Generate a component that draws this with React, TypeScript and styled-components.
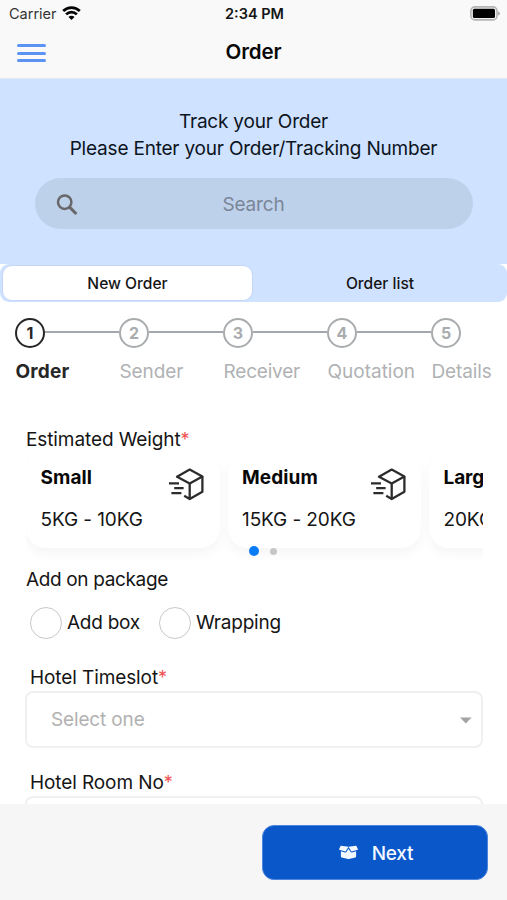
import React from "react";
import styled, { createGlobalStyle } from "styled-components";
import { FaBoxOpen } from "react-icons/fa";

const GlobalStyle = createGlobalStyle`
  *, *::before, *::after { box-sizing: border-box; }
  body { margin: 0; background: #fff; font-family: Inter, "Liberation Sans", sans-serif; color: #151515; }
  button, input { font: inherit; color: inherit; }
`;

const Label = styled.span<{ $size?: number; $weight?: number; $spacing?: number; $color?: string }>`
  font-size: ${(p) => p.$size ?? 19}px;
  font-weight: ${(p) => p.$weight ?? 400};
  letter-spacing: ${(p) => p.$spacing ?? 0}px;
  color: ${(p) => p.$color ?? "#151515"};
  line-height: 26px;
  white-space: nowrap;
`;

const Screen = styled.div`
  width: 507px;
  height: 900px;
  display: flex;
  flex-direction: column;
  overflow: hidden;
  background: #fff;
`;

const Header = styled.header`
  height: 79px;
  flex: none;
  background: #f9f9f9;
  border-bottom: 1px solid #e4eaf4;
`;

const StatusBar = styled.div`
  height: 27px;
  display: grid;
  grid-template-columns: 1fr auto 1fr;
  align-items: center;
  padding: 0 7px 0 9px;
`;

const Carrier = styled.div`
  display: flex;
  align-items: center;
  gap: 5px;
`;

const BatterySlot = styled.div`
  display: flex;
  justify-content: flex-end;
`;

const NavBar = styled.div`
  height: 50px;
  display: grid;
  grid-template-columns: 1fr auto 1fr;
  align-items: center;
  padding: 0 16px;
`;

const MenuButton = styled.button`
  width: 30px;
  height: 18px;
  padding: 0 0 0 0.5px;
  border: 0;
  background: none;
  display: flex;
  flex-direction: column;
  justify-content: space-between;
  margin-top: 2px;
`;

const MenuBar = styled.span`
  width: 29px;
  height: 3px;
  border-radius: 2px;
  background: #5a93f3;
`;

const Banner = styled.section`
  height: 185px;
  flex: none;
  background: #cfe2ff;
  padding: 29px 35px 0;
  display: flex;
  flex-direction: column;
  align-items: center;
`;

const BannerLine = styled(Label)`
  line-height: 27px;
  color: #0c141d;
`;

const SearchField = styled.div`
  width: 438px;
  height: 51px;
  margin-top: 16px;
  border-radius: 26px;
  background: #bed1ea;
  display: grid;
  grid-template-columns: 1fr auto 1fr;
  align-items: center;
  padding: 2px 21px 0 21px;
`;

const Tabs = styled.div`
  height: 38px;
  flex: none;
  display: grid;
  grid-template-columns: 254px 253px;
  background: #cfe2ff;
  border-radius: 9px;
`;

const Tab = styled.button<{ $active?: boolean }>`
  margin: 1px 1px 1px 2px;
  padding: 2px ${(p) => (p.$active ? 0 : 2)}px 0 0;
  border-radius: 10px;
  border: 1px solid ${(p) => (p.$active ? "#c4d6f8" : "transparent")};
  background: ${(p) => (p.$active ? "#fff" : "transparent")};
  display: flex;
  align-items: center;
  justify-content: center;
`;

const Steps = styled.ol`
  list-style: none;
  margin: 0;
  padding: 16px 0 0 15px;
  flex: none;
  height: 125px;
  display: grid;
  grid-template-columns: repeat(5, 104px);
  align-content: start;
`;

const Step = styled.li`
  display: flex;
  flex-direction: column;
  gap: 11px;
`;

const StepTrack = styled.div`
  display: flex;
  align-items: center;
`;

const StepCircle = styled.span<{ $active?: boolean }>`
  width: 30px;
  height: 30px;
  flex: none;
  border-radius: 50%;
  border: 2px solid ${(p) => (p.$active ? "#262626" : "#a9acae")};
  display: flex;
  align-items: center;
  justify-content: center;
`;

const StepLine = styled.span`
  flex: 1;
  height: 2px;
  margin-top: -2px;
  background: #a5a8aa;
`;

const StepLabel = styled(Label)`
  padding-left: 0.5px;
`;

const Form = styled.main`
  flex: 1;
  min-height: 0;
  overflow: hidden;
  padding: 0 24px 0 25px;
  display: flex;
  flex-direction: column;
`;

const FieldTitle = styled.div<{ $indent?: number; $top?: number }>`
  flex: none;
  height: 26px;
  display: flex;
  align-items: flex-start;
  padding-left: ${(p) => p.$indent ?? 1}px;
  margin-top: ${(p) => p.$top ?? 0}px;
`;

const Required = styled(Label)`
  font-size: 18px;
  color: #f05252;
`;

const Carousel = styled.div`
  position: relative;
  flex: none;
  height: 112px;
  margin-left: 1px;
  overflow: hidden;
  display: flex;
  gap: 8px;
`;

const Card = styled.article`
  width: 193.5px;
  height: 97px;
  flex: none;
  margin-top: -2px;
  border-radius: 20px;
  background: #fff;
  box-shadow: 0 6px 12px rgba(0, 0, 0, 0.04);
  padding: 14px 15.5px 0 14.5px;
  display: grid;
  grid-template-columns: 1fr auto;
  grid-template-rows: 42px 26px;
  svg { margin-top: 2px; }
`;

const Dots = styled.div`
  position: absolute;
  left: 223px;
  bottom: 9px;
  display: flex;
  align-items: center;
  gap: 11px;
`;

const Dot = styled.span<{ $active?: boolean }>`
  width: ${(p) => (p.$active ? 10 : 7)}px;
  height: ${(p) => (p.$active ? 10 : 7)}px;
  border-radius: 50%;
  background: ${(p) => (p.$active ? "#087bf8" : "#c6c6c6")};
`;

const Options = styled.div`
  flex: none;
  display: flex;
  gap: 19px;
  padding-left: 5px;
  margin-top: 14px;
`;

const Option = styled.label`
  display: flex;
  align-items: center;
  gap: 5px;
`;

const Radio = styled.span`
  width: 32px;
  height: 32px;
  border-radius: 50%;
  border: 1.5px solid #c8c8c8;
`;

const SelectBox = styled.div`
  flex: none;
  height: 57px;
  margin-top: -0.5px;
  border: 2px solid #f0f0f0;
  border-radius: 8px;
  padding: 2px 9px 0 24px;
  display: flex;
  align-items: center;
  justify-content: space-between;
`;

const Footer = styled.footer`
  flex: none;
  height: 96px;
  background: #f6f6f6;
  padding: 21px 19px 0 0;
  display: flex;
  justify-content: flex-end;
`;

const NextButton = styled.button`
  width: 226px;
  height: 55px;
  border: 1px solid #4c85dd;
  border-radius: 12px;
  background: #0957c9;
  color: #f4f8ff;
  display: flex;
  align-items: center;
  justify-content: center;
  gap: 14px;
  padding: 2px 0 0 2px;
  svg { margin-top: -2px; }
`;

const WifiIcon = () => (
  <svg width="19" height="15" viewBox="0 0 19 15" fill="none" stroke="#050505" strokeWidth="2.7">
    <path d="M1.2 5a11.8 11.8 0 0 1 16.6 0M4.1 8.4a7.7 7.7 0 0 1 10.8 0" />
    <path d="M9.5 14 6.5 11a4.2 4.2 0 0 1 6 0Z" fill="#050505" stroke="none" />
  </svg>
);

const BatteryIcon = () => (
  <svg width="30" height="15" viewBox="0 0 30 15">
    <rect x="0.9" y="0.9" width="26.1" height="13" rx="4" fill="#f0f0f0" stroke="#b4b4b4" strokeWidth="1.6" />
    <rect x="2.9" y="2.8" width="22.1" height="9.2" rx="1.5" fill="#000" />
    <path d="M28 5.2q2 1 2 2.3t-2 2.3Z" fill="#aeaeae" />
  </svg>
);

const SearchIcon = () => (
  <svg width="22" height="22" viewBox="0 0 22 22" fill="none" stroke="#68686a">
    <circle cx="8.7" cy="8.2" r="6.7" strokeWidth="2.5" />
    <path d="M13.3 12.9 20.4 20" strokeWidth="3.1" />
  </svg>
);

const ParcelIcon = () => (
  <svg width="36" height="34" viewBox="0 0 36 34" fill="none" stroke="#2c2c2c" strokeWidth="2.3" strokeLinejoin="round">
    <path d="M9 9.8 21.7 2.6 34.4 9.4 21.7 16.4Z" />
    <path d="M34.4 9.4V24.8L21.7 32V16.4M21.7 32 16.2 28.8" />
    <path d="M1 16.4H11M6.2 21.2H15.6M3.4 26.2H13.4" />
  </svg>
);

const Caret = () => (
  <svg width="12" height="7" viewBox="0 0 12 7">
    <path d="M0 0.5H11.6L5.8 6.5Z" fill="#a3a3a3" />
  </svg>
);

const steps = [
  { name: "Order", spacing: 0.2 },
  { name: "Sender", spacing: -0.1 },
  { name: "Receiver", spacing: -0.2 },
  { name: "Quotation", spacing: 0 },
  { name: "Details", spacing: -0.1 },
];

const sizes = [
  { name: "Small", range: "5KG - 10KG", spacing: 0.1 },
  { name: "Medium", range: "15KG - 20KG", spacing: 0.1 },
  { name: "Large", range: "20KG - 30KG", spacing: -0.1 },
];

const Star = () => <Required>*</Required>;

export default function App() {
  return (
    <Screen>
      <GlobalStyle />
      <Header>
        <StatusBar>
          <Carrier>
            <Label $size={14.5} $color="#333">Carrier</Label>
            <WifiIcon />
          </Carrier>
          <Label $size={14.5} $weight={600}>2:34 PM</Label>
          <BatterySlot><BatteryIcon /></BatterySlot>
        </StatusBar>
        <NavBar>
          <MenuButton aria-label="Menu"><MenuBar /><MenuBar /><MenuBar /></MenuButton>
          <Label $size={20.5} $weight={600} $spacing={-0.1} $color="#080808">Order</Label>
        </NavBar>
      </Header>

      <Banner>
        <BannerLine $spacing={-0.2}>Track your Order</BannerLine>
        <BannerLine $spacing={-0.2}>Please Enter your Order/Tracking Number</BannerLine>
        <SearchField>
          <SearchIcon />
          <Label $color="#7a8698" $spacing={-0.2}>Search</Label>
        </SearchField>
      </Banner>

      <Tabs>
        <Tab $active><Label $size={15.6} $weight={500}>New Order</Label></Tab>
        <Tab><Label $size={15.6} $weight={500}>Order list</Label></Tab>
      </Tabs>

      <Steps>
        {steps.map((s, i) => (
          <Step key={s.name}>
            <StepTrack>
              <StepCircle $active={i === 0}>
                <Label $size={16} $weight={700} $color={i === 0 ? "#262626" : "#a9acae"}>{i + 1}</Label>
              </StepCircle>
              {i < steps.length - 1 && <StepLine />}
            </StepTrack>
            <StepLabel $weight={i === 0 ? 700 : 400} $color={i === 0 ? "#262626" : "#b0b2b4"} $spacing={s.spacing}>
              {s.name}
            </StepLabel>
          </Step>
        ))}
      </Steps>

      <Form>
        <FieldTitle><Label $spacing={-0.1}>Estimated Weight</Label><Star /></FieldTitle>
        <Carousel>
          {sizes.map((s) => (
            <Card key={s.name}>
              <Label $weight={700} $color="#080808" $spacing={s.spacing}>{s.name}</Label>
              <ParcelIcon />
              <Label $spacing={-0.1}>{s.range}</Label>
            </Card>
          ))}
          <Dots><Dot $active /><Dot /></Dots>
        </Carousel>
        <FieldTitle $top={2}><Label $spacing={-0.35}>Add on package</Label></FieldTitle>
        <Options>
          <Option><Radio /><Label $spacing={-0.25}>Add box</Label></Option>
          <Option><Radio /><Label $spacing={-0.2}>Wrapping</Label></Option>
        </Options>
        <FieldTitle $indent={5} $top={26}><Label $spacing={-0.1}>Hotel Timeslot</Label><Star /></FieldTitle>
        <SelectBox><Label $color="#b1b1b1" $spacing={-0.15}>Select one</Label><Caret /></SelectBox>
        <FieldTitle $indent={5} $top={22.5}><Label $spacing={-0.1}>Hotel Room No</Label><Star /></FieldTitle>
        <SelectBox />
      </Form>

      <Footer>
        <NextButton>
          <FaBoxOpen size={19} />
          <Label $color="#f4f8ff" $weight={500} $spacing={-0.2}>Next</Label>
        </NextButton>
      </Footer>
    </Screen>
  );
}
